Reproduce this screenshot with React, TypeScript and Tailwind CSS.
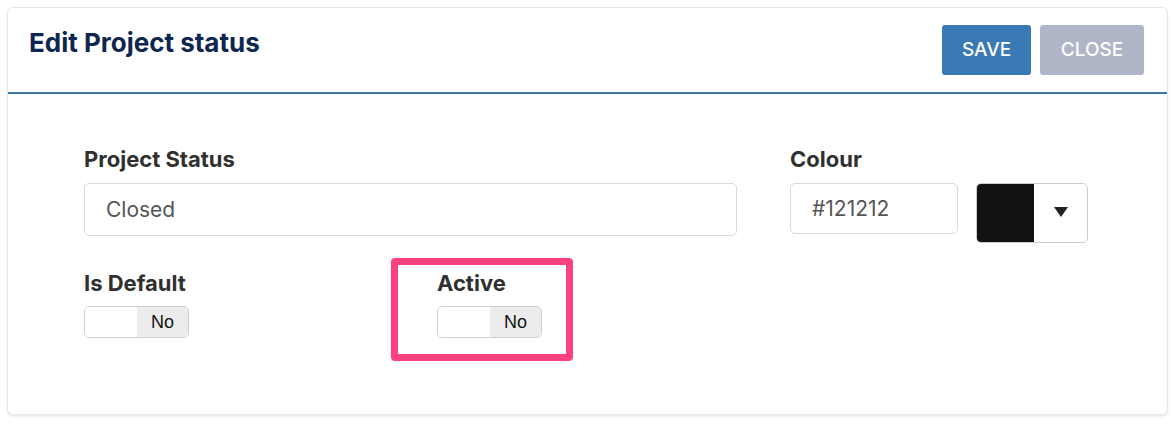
import React from "react";

// Edit dialog for a project status: name, colour, and two yes/no toggles.

const FONT = "font-['Inter','Noto_Sans',sans-serif]";

function Toggle({ value }: { value: string }) {
  return (
    <div className="flex h-[32px] w-[105px] overflow-hidden rounded-[5px] border border-[#cfcfcf]">
      <div className="w-[52px] bg-white" />
      <div className="flex flex-1 items-center justify-center bg-[#ececec] font-['Liberation_Sans',Arial,sans-serif] text-[18px] text-[#111]">
        {value}
      </div>
    </div>
  );
}

function Label({ children }: { children: React.ReactNode }) {
  return <p className="text-[22px] font-bold leading-[28px] text-[#303030]">{children}</p>;
}

export default function App() {
  return (
    <div className={`min-h-screen bg-white p-[7px] ${FONT}`}>
      <div className="h-[408px] w-[1161px] overflow-hidden rounded-[6px] border border-[#e3e6eb] bg-white shadow-[0_2px_3px_rgba(0,0,0,0.08)]">
        {/* header */}
        <div className="flex h-[86px] items-start justify-between border-b-2 border-[#3b77a6] pl-[21px] pr-[23px]">
          <h1 className="pt-[19px] text-[26px] font-bold leading-[32px] text-[#0f2750]">Edit Project status</h1>
          <div className="flex gap-[9px] pt-[17px]">
            <button className="h-[50px] w-[89px] rounded-[3px] bg-[#3a7ab4] text-[19px] font-medium text-white">SAVE</button>
            <button className="h-[50px] w-[104px] rounded-[3px] bg-[#b0b5c8] text-[19px] font-medium text-white">CLOSE</button>
          </div>
        </div>

        {/* body */}
        <div className="pl-[76px] pt-[51px]">
          <div className="flex items-start">
            <div className="w-[653px]">
              <Label>Project Status</Label>
              <div className="mt-[10px] flex h-[53px] items-center rounded-[5px] border border-[#d5dae0] px-[21px] text-[21px] text-[#555]">
                Closed
              </div>
            </div>
            <div className="ml-[53px]">
              <Label>Colour</Label>
              <div className="mt-[10px] flex items-start gap-[18px]">
                <div className="flex h-[51px] w-[168px] items-center rounded-[5px] border border-[#d5dae0] px-[21px] text-[21px] text-[#555]">
                  #121212
                </div>
                <div className="flex h-[60px] w-[112px] overflow-hidden rounded-[5px] border border-[#cccccc]">
                  <div className="w-[57px] bg-[#121212]" />
                  <div className="flex flex-1 items-center justify-center pb-[2px]">
                    <svg width="14" height="10" viewBox="0 0 14 10">
                      <path d="M0 0 L14 0 L7 10 Z" fill="#222" />
                    </svg>
                  </div>
                </div>
              </div>
            </div>
          </div>

          <div className="mt-[26px] flex">
            <div className="w-[353px]">
              <Label>Is Default</Label>
              <div className="mt-[9px]">
                <Toggle value="No" />
              </div>
            </div>
            <div className="relative">
              <div className="absolute left-[-46px] top-[-11px] h-[103px] w-[182px] rounded-[4px] border-[7px] border-[#fe4181]" />
              <Label>Active</Label>
              <div className="mt-[9px]">
                <Toggle value="No" />
              </div>
            </div>
          </div>
        </div>
      </div>
    </div>
  );
}
